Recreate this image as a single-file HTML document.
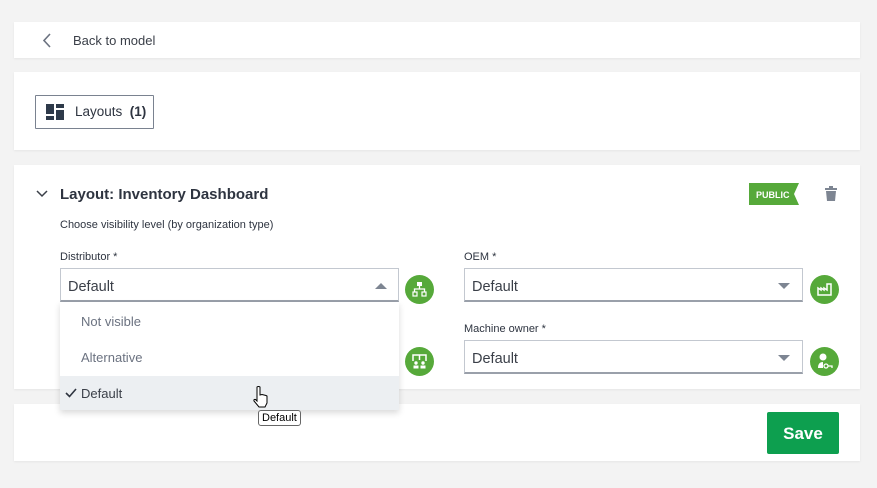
<!DOCTYPE html>
<html><head><style>
body{margin:0;width:877px;height:488px;background:#f3f3f3;font-family:"Liberation Sans",sans-serif;color:#2e3440;position:relative;overflow:hidden}
.card{position:absolute;left:14px;width:846px;background:#fff;box-shadow:0 1px 2px rgba(0,0,0,.06)}
.abs{position:absolute}
.sel{position:absolute;height:34px;border:1px solid #c3c8d0;border-bottom:2px solid #9aa0aa;background:#fff;box-sizing:border-box;font-size:14.5px;color:#3a3f48;line-height:36px;padding-left:7px}
.lbl{position:absolute;font-size:11px;color:#2e3440}
.circ{position:absolute;width:29px;height:29px;border-radius:50%;background:#56a93a}
.tri{position:absolute;width:0;height:0;border-left:6px solid transparent;border-right:6px solid transparent}
</style></head><body>
<div class="card" style="top:22px;height:36px">
<svg class="abs" style="left:28px;top:11px" width="10" height="15"><path d="M8 1 L2 7.5 L8 14" stroke="#6b7280" stroke-width="1.6" fill="none"/></svg>
<div class="abs" style="left:59px;top:11px;font-size:13px;color:#3a3f48">Back to model</div>
</div>
<div class="card" style="top:72px;height:78px">
<div class="abs" style="left:21px;top:23px;width:119px;height:34px;border:1px solid #7a8290;box-sizing:border-box;border-radius:1px">
<div class="abs" style="left:10px;top:8px;width:8px;height:10px;background:#2e3a4a"></div>
<div class="abs" style="left:10px;top:20px;width:8px;height:4px;background:#2e3a4a"></div>
<div class="abs" style="left:20px;top:8px;width:8px;height:4px;background:#2e3a4a"></div>
<div class="abs" style="left:20px;top:14px;width:8px;height:10px;background:#2e3a4a"></div>
<div class="abs" style="left:39px;top:8px;font-size:13.5px;color:#2e3440;white-space:nowrap">Layouts&nbsp; <b>(1)</b></div>
</div>
</div>
<div class="card" style="top:165px;height:224px">
<svg class="abs" style="left:22px;top:25px" width="12" height="8"><path d="M1 1 L6 6 L11 1" stroke="#3a3f48" stroke-width="1.5" fill="none"/></svg>
<div class="abs" style="left:46px;top:21px;font-size:15px;font-weight:bold;color:#2e3440">Layout: Inventory Dashboard</div>
<div class="abs" style="left:46px;top:54px;font-size:11px">Choose visibility level (by organization type)</div>
<svg class="abs" style="left:735px;top:18px" width="50" height="22"><path d="M0 0 H50 L45 11 L50 22 H0Z" fill="#56a93a"/><text x="7" y="15" font-family="Liberation Sans" font-size="9" font-weight="bold" fill="#fff">PUBLIC</text></svg>
<svg class="abs" style="left:811px;top:21px" width="12" height="16"><rect x="0" y="2" width="12" height="2" fill="#7d8592"/><rect x="4" y="0" width="4" height="2" fill="#7d8592"/><path d="M1 5 H11 L10 15 H2Z" fill="#7d8592"/></svg>
<div class="lbl" style="left:46px;top:86px">Distributor *</div>
<div class="lbl" style="left:450px;top:86px">OEM *</div>
<div class="lbl" style="left:450px;top:158px">Machine owner *</div>
<div class="sel" style="left:450px;top:103px;width:339px">Default</div>
<div class="tri" style="left:764px;top:118px;border-top:6px solid #7d8592"></div>
<div class="sel" style="left:450px;top:175px;width:339px">Default</div>
<div class="tri" style="left:764px;top:190px;border-top:6px solid #7d8592"></div>
<div class="circ" style="left:796px;top:110px"><svg width="29" height="29"><path d="M8 20 V13 L11 15 V13 L14 15 V13 L17 15 V9 H19 V9 H21 V20Z" fill="none" stroke="#fff" stroke-width="1.5"/></svg></div>
<div class="circ" style="left:796px;top:182px"><svg width="29" height="29"><circle cx="13" cy="10" r="3.5" fill="#fff"/><path d="M8 21 Q8 15 13 15 L13 21Z" fill="#fff"/><circle cx="16" cy="19" r="2" fill="none" stroke="#fff" stroke-width="1.3"/><path d="M18 19 H22 V21" stroke="#fff" stroke-width="1.3" fill="none"/></svg></div>
<div class="circ" style="left:391px;top:110px"><svg width="29" height="29"><rect x="12" y="7" width="5" height="4" fill="#fff"/><path d="M14.5 11 V14 M9.5 17 V14 H19.5 V17" stroke="#fff" stroke-width="1.3" fill="none"/><rect x="8" y="17" width="4" height="4" fill="none" stroke="#fff" stroke-width="1.2"/><rect x="17" y="17" width="4" height="4" fill="none" stroke="#fff" stroke-width="1.2"/></svg></div>
<div class="circ" style="left:391px;top:182px"><svg width="29" height="29"><path d="M8 14 V8 H21 V14 M14.5 8 V13" stroke="#fff" stroke-width="1.5" fill="none"/><circle cx="11" cy="16" r="1.7" fill="#fff"/><circle cx="18" cy="16" r="1.7" fill="#fff"/><rect x="8.5" y="18.5" width="5" height="3" fill="#fff"/><rect x="15.5" y="18.5" width="5" height="3" fill="#fff"/></svg></div>
</div>
<div class="card" style="top:404px;height:57px">
<div class="abs" style="left:753px;top:8px;width:72px;height:42px;background:#0d9f4f;border-radius:2px;color:#fff;font-weight:bold;font-size:17px;text-align:center;line-height:43px">Save</div>
</div>
<div class="sel" style="left:60px;top:268px;width:339px;z-index:2">Default</div>
<div class="tri" style="left:375px;top:283px;border-bottom:6px solid #7d8592;z-index:3"></div>
<div class="abs" style="left:60px;top:302px;width:339px;height:108px;background:#fff;box-shadow:0 3px 6px rgba(0,0,0,.15);z-index:2;font-size:13px;color:#6b7280">
<div class="abs" style="left:21px;top:12px">Not visible</div>
<div class="abs" style="left:21px;top:48px">Alternative</div>
<div class="abs" style="left:0;top:74px;width:339px;height:34px;background:#eceff2"></div>
<svg class="abs" style="left:5px;top:86px" width="12" height="10"><path d="M1 5 L4.5 8.5 L11 1" stroke="#2e3440" stroke-width="1.6" fill="none"/></svg>
<div class="abs" style="left:21px;top:84px;color:#3a3f48">Default</div>
</div>
<svg class="abs" style="left:252px;top:385px;z-index:4" width="18" height="24"><path d="M5 2 Q6.5 1 8 2 V10 L10 9.5 12 10 14 10.5 15 11 V18 L13 22 H7 L2 16 Q1.5 14 3.5 14.5 L5 16Z" fill="#fff" stroke="#000" stroke-width="1"/></svg>
<div class="abs" style="left:258px;top:410px;z-index:4;border:1px solid #666;border-radius:3px;background:#fff;font-size:11px;padding:1px 3px;color:#000">Default</div>
</body></html>
